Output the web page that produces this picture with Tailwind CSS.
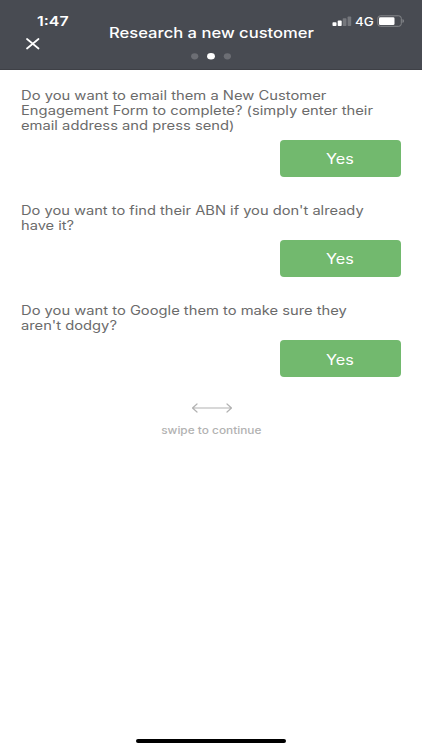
<!DOCTYPE html>
<html lang="en">
<head>
<meta charset="utf-8">
<meta name="viewport" content="width=device-width, initial-scale=1">
<title>Research a new customer</title>
<script src="https://cdn.jsdelivr.net/npm/@tailwindcss/browser@4"></script>
</head>
<body class="bg-white">
<div class="w-[422px] h-[750px] overflow-hidden flex flex-col bg-white font-['Inter','Liberation_Sans',sans-serif]">
  <header class="relative h-[70px] shrink-0 bg-[#484b52] border-b border-[#3e4046] text-white flex flex-col items-center pt-[23px]">
    <div class="absolute left-[37px] top-[13px] text-[13.500px] leading-4 font-semibold origin-left scale-x-[1.18] whitespace-nowrap">1:47</div>
    <svg class="absolute left-[26px] top-[38px]" width="14" height="12" viewBox="0 0 14 12" fill="none" stroke="#fff" stroke-width="1.700" stroke-linecap="round"><path d="M1 1L12.500 10.500M12.500 1L1 10.500"/></svg>
    <div class="absolute left-[332px] top-[15px] h-3 flex items-center">
      <svg width="20" height="12" viewBox="0 0 20 12"><g fill="#fff"><rect x="0.500" y="7.300" width="4" height="3.700" rx="0.800"/><rect x="5.700" y="5.600" width="4" height="5.400" rx="0.800"/></g><g fill="#75777c"><rect x="10.700" y="3.300" width="3.800" height="7.700" rx="0.800"/><rect x="15.600" y="1.500" width="3.600" height="9.500" rx="0.800"/></g></svg>
      <span class="ml-[3px] mt-[2px] w-[18px] text-[11.500px] leading-3 font-medium origin-left scale-x-[1.16]">4G</span>
      <svg class="ml-[4px]" width="29" height="12" viewBox="0 0 29 12"><rect x="0.800" y="0.800" width="23.500" height="10.500" rx="2.600" fill="none" stroke="#85878b"/><rect x="2" y="2.200" width="15.500" height="7.800" rx="1.300" fill="#fff"/><path d="M25.500 4v4q1.500-.6 1.500-2T25.500 4z" fill="#85878b"/></svg>
    </div>
    <h1 class="text-[14px] leading-5 font-medium whitespace-nowrap scale-x-[1.185]">Research a new customer</h1>
    <svg class="mt-[9px]" width="42" height="8" viewBox="0 0 42 8"><ellipse cx="4.700" cy="4.300" rx="3.600" ry="3.100" fill="#6c6e74"/><ellipse cx="21" cy="4.300" rx="3.900" ry="3.200" fill="#fff"/><ellipse cx="37.400" cy="4.300" rx="3.600" ry="3.100" fill="#6c6e74"/></svg>
  </header>
  <main class="grow flex flex-col pl-[21px] pr-[21.500px] pt-[18px] text-[12.500px] leading-[14.800px] text-[#6b6b6b]">
    <section class="h-[115.500px] shrink-0 flex flex-col">
      <p class="h-[52px] relative top-[-0.500px] leading-[15px] origin-left scale-x-[1.18] whitespace-nowrap">Do you want to email them a New Customer<br>Engagement Form to complete? (simply enter their<br>email address and press send)</p>
      <button class="self-end w-[120.500px] h-[37px] rounded-[4px] bg-[#72b96e] text-white text-[14px] pt-[2px]"><span class="inline-block scale-x-[1.16]">Yes</span></button>
    </section>
    <section class="h-[100.300px] shrink-0 flex flex-col">
      <p class="h-[36.500px] relative top-[0.600px] origin-left scale-x-[1.172] whitespace-nowrap">Do you want to find their ABN if you don't already<br>have it?</p>
      <button class="self-end w-[120.500px] h-[37px] rounded-[4px] bg-[#72b96e] text-white text-[14px] pt-[2px]"><span class="inline-block scale-x-[1.16]">Yes</span></button>
    </section>
    <section class="h-[98.800px] shrink-0 flex flex-col">
      <p class="h-[36.700px] relative top-[0.600px] origin-left scale-x-[1.178] whitespace-nowrap">Do you want to Google them to make sure they<br>aren't dodgy?</p>
      <button class="self-end w-[120.500px] h-[37px] rounded-[4px] bg-[#72b96e] text-white text-[14px] pt-[2px]"><span class="inline-block scale-x-[1.16]">Yes</span></button>
    </section>
    <div class="flex flex-col items-center text-[#b2b2b2] pl-[1.500px]">
      <svg width="42" height="10" viewBox="0 0 42 10" fill="none" stroke="#b2b2b2" stroke-width="1.200" stroke-linecap="round" stroke-linejoin="round"><path d="M1.500 5H40.500M6 1L1.500 5L6 9M36 1L40.500 5L36 9"/></svg>
      <p class="mt-[10px] text-[10px] font-medium whitespace-nowrap scale-x-[1.185]">swipe to continue</p>
    </div>
  </main>
  <footer class="h-[12px] shrink-0 flex justify-center"><div class="mt-[1px] w-[150px] h-[4px] rounded-full bg-black"></div></footer>
</div>
</body>
</html>
